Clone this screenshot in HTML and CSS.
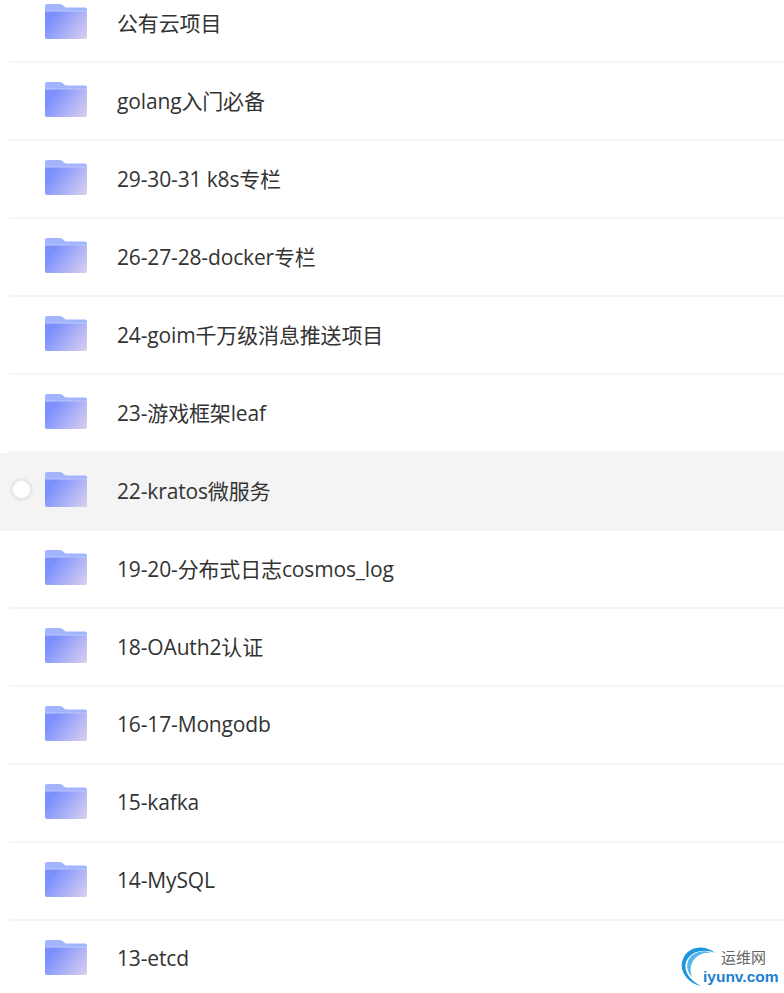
FILE: index.html
```html
<!DOCTYPE html>
<html lang="zh">
<head>
    <meta charset="UTF-8">
    <meta name="viewport" content="width=device-width, initial-scale=1.0">
    <title>文件列表</title>
    <link rel="stylesheet" href="styles.css">
</head>
<body>
    <svg class="defs" width="0" height="0">
        <defs>
            <linearGradient id="folderFront" x1="0" y1="0.3" x2="1" y2="0.8">
                <stop offset="0.1" stop-color="#7b90fd"/>
                <stop offset="1" stop-color="#d3cbf1"/>
            </linearGradient>
            <symbol id="folder" viewBox="0 0 42 35">
                <path d="M2 0H14C16 0 17 .6 18.500 2L20.500 3.500H40C41.200 3.500 42 4.300 42 5.500V10H0V2C0 .8 .8 0 2 0Z" fill="#a3b4fe"/>
                <path d="M0 7H42V33C42 34.200 41.200 35 40 35H2C.8 35 0 34.200 0 33Z" fill="url(#folderFront)"/>
                <rect y="6.500" width="42" height="1" fill="#bcc8ff"/>
            </symbol>
        </defs>
    </svg>

    <ul class="list">
        <li class="row"><svg class="folder"><use href="#folder"/></svg><span class="name">公有云项目</span></li>
        <li class="row"><svg class="folder"><use href="#folder"/></svg><span class="name">golang入门必备</span></li>
        <li class="row"><svg class="folder"><use href="#folder"/></svg><span class="name">29-30-31 k8s专栏</span></li>
        <li class="row"><svg class="folder"><use href="#folder"/></svg><span class="name">26-27-28-docker专栏</span></li>
        <li class="row"><svg class="folder"><use href="#folder"/></svg><span class="name">24-goim千万级消息推送项目</span></li>
        <li class="row"><svg class="folder"><use href="#folder"/></svg><span class="name">23-游戏框架leaf</span></li>
        <li class="row active"><span class="check"></span><svg class="folder"><use href="#folder"/></svg><span class="name">22-kratos微服务</span></li>
        <li class="row"><svg class="folder"><use href="#folder"/></svg><span class="name">19-20-分布式日志cosmos_log</span></li>
        <li class="row"><svg class="folder"><use href="#folder"/></svg><span class="name">18-OAuth2认证</span></li>
        <li class="row"><svg class="folder"><use href="#folder"/></svg><span class="name">16-17-Mongodb</span></li>
        <li class="row"><svg class="folder"><use href="#folder"/></svg><span class="name">15-kafka</span></li>
        <li class="row"><svg class="folder"><use href="#folder"/></svg><span class="name">14-MySQL</span></li>
        <li class="row"><svg class="folder"><use href="#folder"/></svg><span class="name">13-etcd</span></li>
    </ul>

    <div class="mark">
        <svg class="mark-logo" width="40" height="42" viewBox="0 0 40 42">
            <path d="M35 8C25 -1 8 1 3 14C-2 26 8 38 21 41C11 36 3 27 6 17C10 6 24 3 35 8Z" fill="#1d95dc"/>
            <path d="M31 8C23 4 12 7 8 16C6 22 8 28 12 32C10 26 10 21 13 16C17 10 24 7 31 8Z" fill="#55b6ea"/>
        </svg>
        <span class="mark-cn">运维网</span>
        <span class="mark-en">iyunv.com</span>
    </div>
</body>
</html>
```

FILE: styles.css
```css
html, body {
    margin: 0;
    height: 993px;
    overflow: hidden;
    background: #fff;
    font-family: "Open Sans", "Noto Sans CJK SC", sans-serif;
}

.defs {
    position: absolute;
}

.list {
    list-style: none;
    margin: -15px 0 0 0;
    padding: 0;
}

.row {
    position: relative;
    display: flex;
    align-items: center;
    height: 78px;
    box-sizing: border-box;
    margin-left: 9px;
    padding-left: 36px;
    border-bottom: 2px solid #f5f5f5;
}

.active {
    margin-left: 0;
    padding-left: 45px;
    background: #f4f4f4;
    border-bottom-color: #f4f4f4;
}

.check {
    position: absolute;
    left: 10px;
    top: 25px;
    width: 17px;
    height: 17px;
    border: 3px solid #e9e9e9;
    border-radius: 50%;
    background: #fff;
}

.folder {
    width: 42px;
    height: 35px;
    flex-shrink: 0;
    margin-top: -3px;
}

.name {
    margin-left: 30px;
    margin-bottom: 2px;
    font-size: 21px;
    letter-spacing: -0.15px;
    color: #333;
    white-space: nowrap;
}

/* watermark */
.mark {
    position: absolute;
    left: 680px;
    top: 945px;
    width: 104px;
    height: 44px;
}

.mark-logo {
    position: absolute;
    left: 0;
    top: 0;
}

.mark-cn {
    position: absolute;
    left: 41px;
    top: 2px;
    font-size: 15px;
    line-height: 20px;
    color: #666;
}

.mark-en {
    position: absolute;
    left: 23px;
    top: 23px;
    font-family: "Liberation Sans", sans-serif;
    font-size: 15.500px;
    line-height: 18px;
    font-weight: bold;
    color: #1d7fd0;
}
```
